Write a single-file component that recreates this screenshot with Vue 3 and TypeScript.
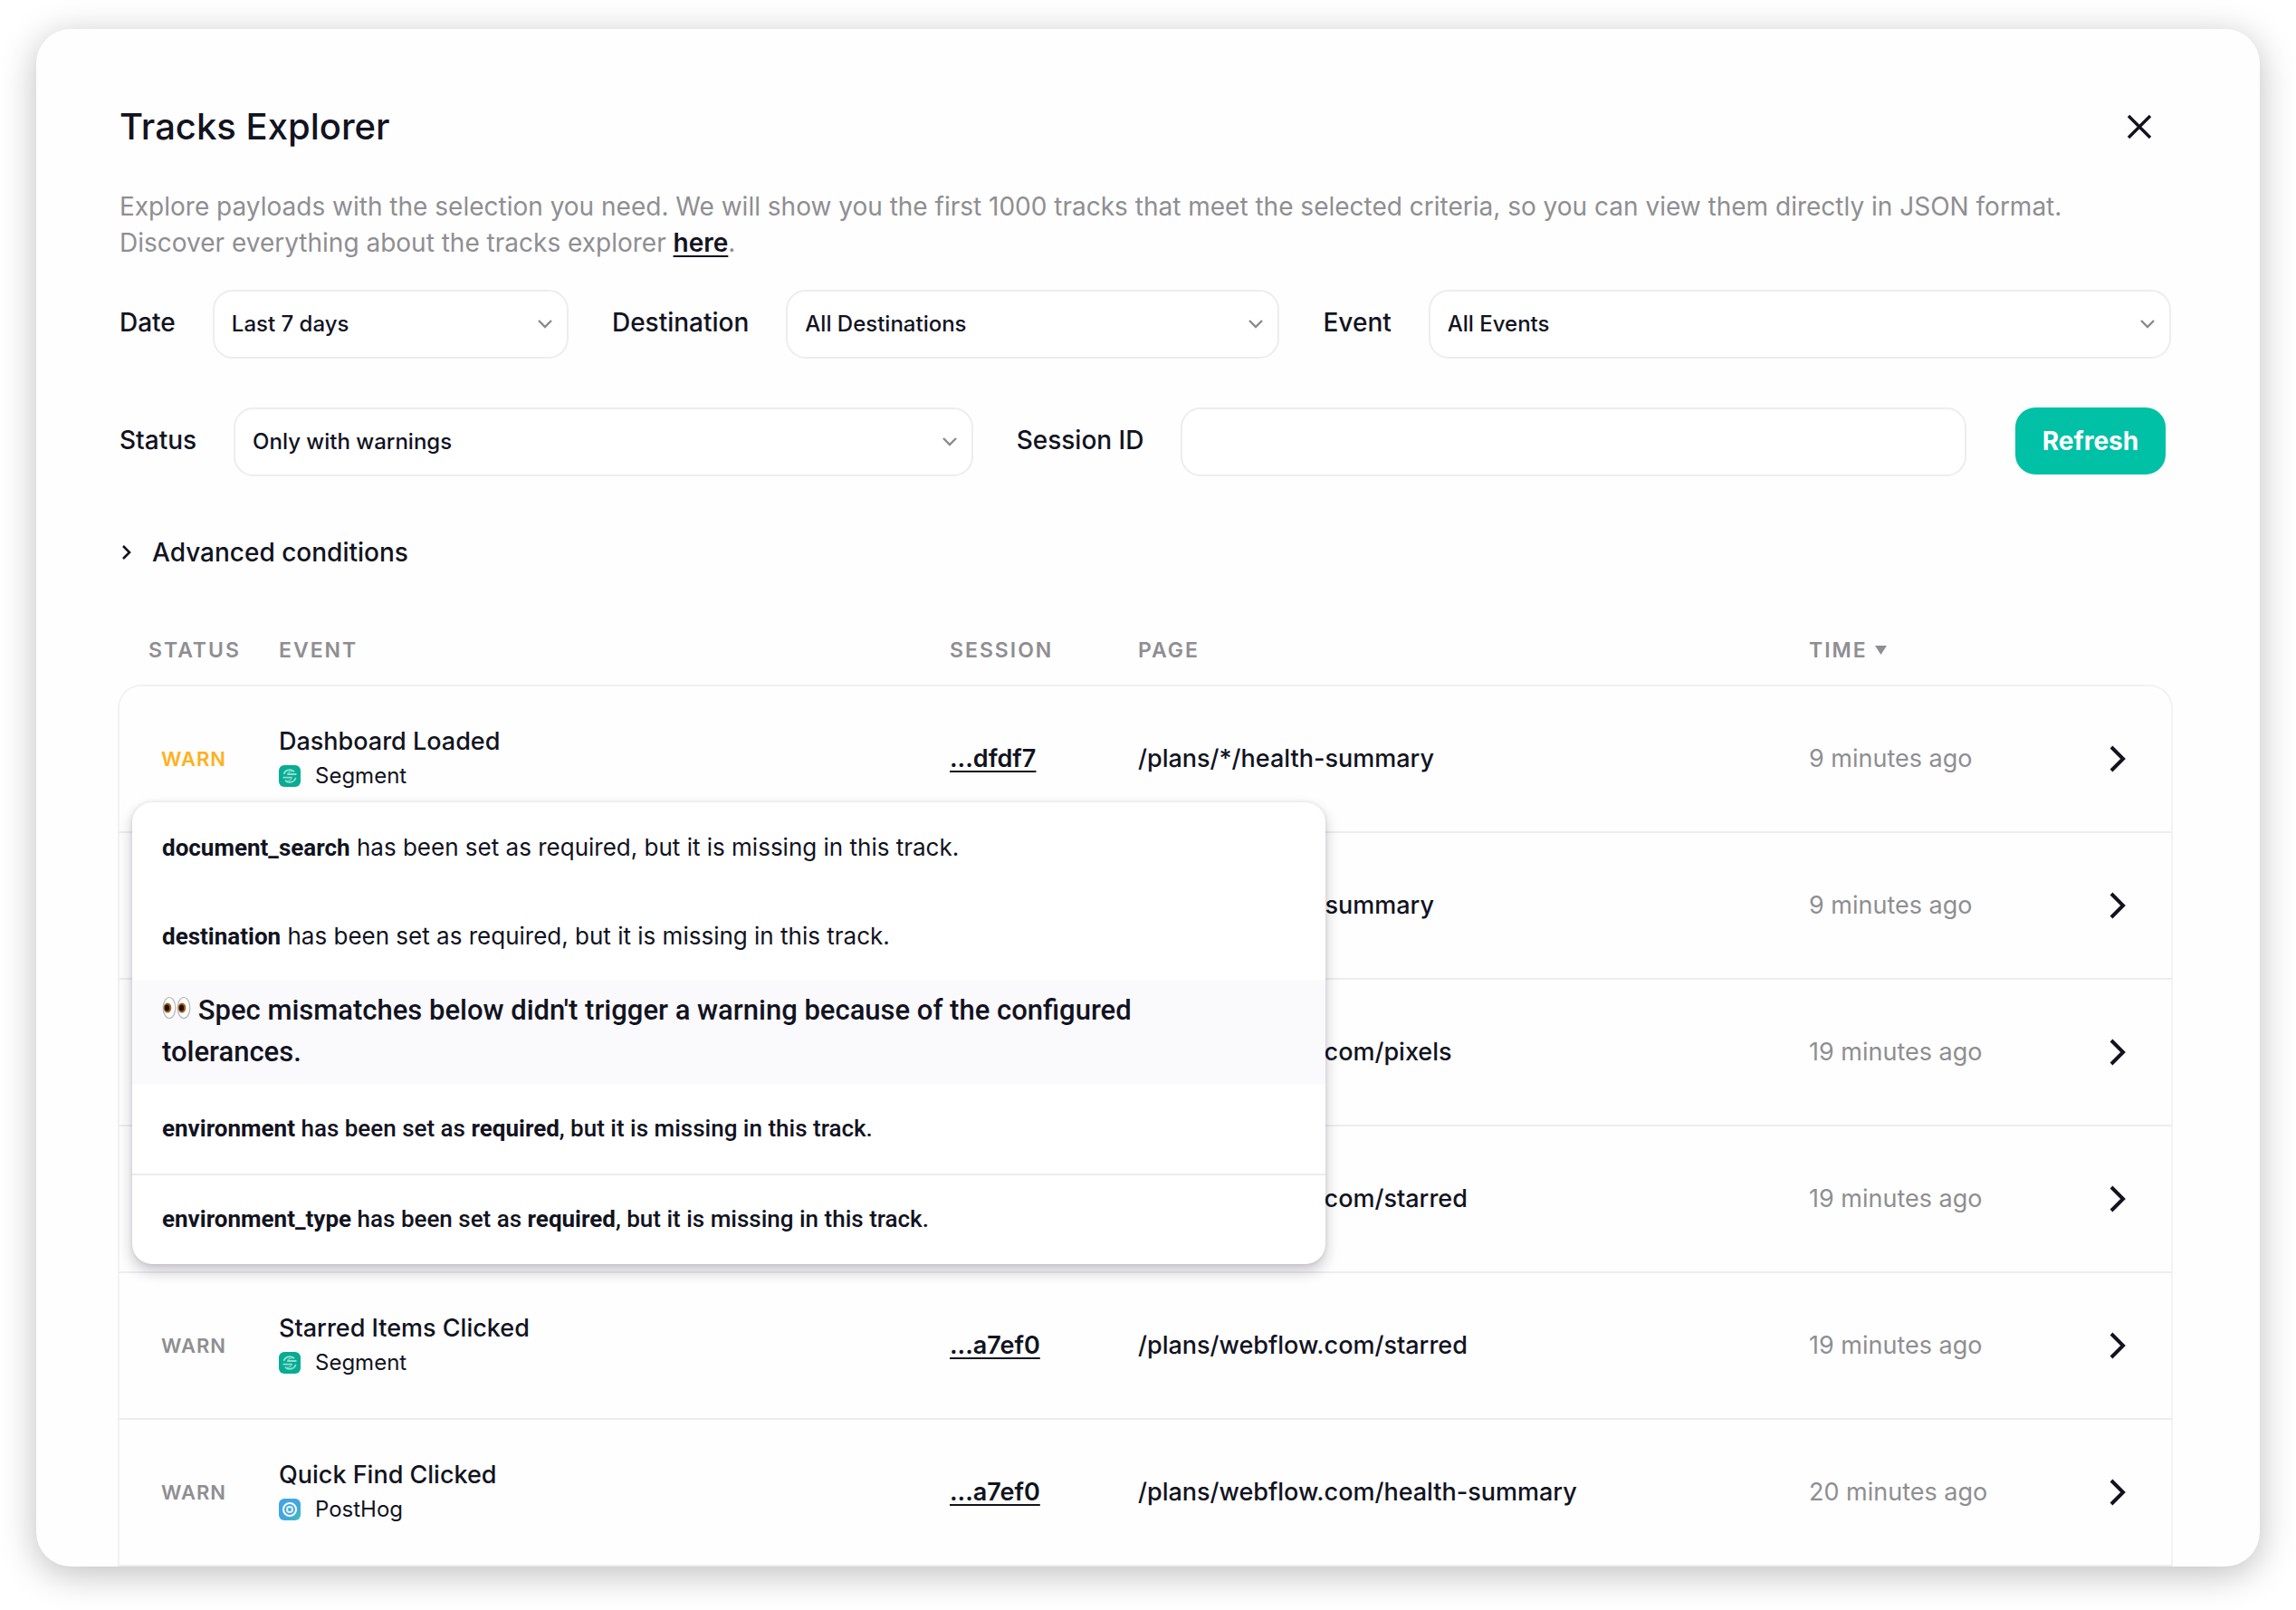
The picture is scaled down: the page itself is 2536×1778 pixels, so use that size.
<script setup lang="ts">
import { ref } from 'vue'

interface Track {
  id: number
  status?: string
  active?: boolean
  event?: string
  destination?: 'Segment' | 'PostHog'
  session?: string
  page: string
  time: string
}

const tracks: Track[] = [
  { id: 1, status: 'Warn', active: true, event: 'Dashboard Loaded', destination: 'Segment', session: '...dfdf7', page: '/plans/*/health-summary', time: '9 minutes ago' },
  { id: 2, page: '/plans/*/health-summary', time: '9 minutes ago' },
  { id: 3, page: '/plans/webflow.com/pixels', time: '19 minutes ago' },
  { id: 4, page: '/plans/webflow.com/starred', time: '19 minutes ago' },
  { id: 5, status: 'Warn', event: 'Starred Items Clicked', destination: 'Segment', session: '...a7ef0', page: '/plans/webflow.com/starred', time: '19 minutes ago' },
  { id: 6, status: 'Warn', event: 'Quick Find Clicked', destination: 'PostHog', session: '...a7ef0', page: '/plans/webflow.com/health-summary', time: '20 minutes ago' },
]

const date = ref('Last 7 days')
const destination = ref('All Destinations')
const eventName = ref('All Events')
const status = ref('Only with warnings')
const sessionId = ref('')
</script>

<template>
  <main class="card">
    <header class="head">
      <h1>Tracks Explorer</h1>
      <button class="close" type="button" aria-label="Close">
        <svg width="28" height="28" viewBox="0 0 28 28"><path d="M2 2 26 26M26 2 2 26" fill="none" stroke="currentColor" stroke-width="3.4" /></svg>
      </button>
    </header>
    <p class="intro">
      Explore payloads with the selection you need. We will show you the first 1000 tracks that meet the selected criteria, so you can view them directly in JSON format.<br>
      Discover everything about the tracks explorer <a href="#">here</a>.
    </p>

    <form class="filters" @submit.prevent>
      <div class="line">
        <label for="date">Date</label>
        <div class="field date">
          <select id="date" v-model="date"><option>Last 7 days</option></select>
          <svg class="caret" viewBox="0 0 18 12"><path d="M2 2 9 9 16 2" /></svg>
        </div>
        <label for="destination">Destination</label>
        <div class="field destination">
          <select id="destination" v-model="destination"><option>All Destinations</option></select>
          <svg class="caret" viewBox="0 0 18 12"><path d="M2 2 9 9 16 2" /></svg>
        </div>
        <label for="event">Event</label>
        <div class="field event">
          <select id="event" v-model="eventName"><option>All Events</option></select>
          <svg class="caret" viewBox="0 0 18 12"><path d="M2 2 9 9 16 2" /></svg>
        </div>
      </div>
      <div class="line second">
        <label for="status">Status</label>
        <div class="field status">
          <select id="status" v-model="status"><option>Only with warnings</option></select>
          <svg class="caret" viewBox="0 0 18 12"><path d="M2 2 9 9 16 2" /></svg>
        </div>
        <label for="session">Session ID</label>
        <div class="field session"><input id="session" v-model="sessionId" type="text"></div>
        <button class="refresh" type="submit">Refresh</button>
      </div>
    </form>

    <button class="advanced" type="button">
      <svg width="16" height="18" viewBox="0 0 16 18"><path d="M4 2 11 9 4 16" fill="none" stroke="currentColor" stroke-width="2.6" /></svg>
      Advanced conditions
    </button>

    <div class="results">
      <table>
        <colgroup><col class="c-status"><col><col class="c-session"><col><col class="c-time"><col class="c-open"></colgroup>
        <thead>
          <tr>
            <th class="h-status">Status</th>
            <th>Event</th>
            <th>Session</th>
            <th>Page</th>
            <th>Time <svg class="sort" width="13" height="10" viewBox="0 0 13 10"><path d="M0 0H13L6.500 10Z" fill="currentColor" /></svg></th>
            <th></th>
          </tr>
        </thead>
        <tbody>
          <tr v-for="t in tracks" :key="t.id">
            <td class="warn" :class="{ active: t.active }">{{ t.status }}</td>
            <td>
              <div v-if="t.event" class="name">{{ t.event }}</div>
              <div v-if="t.destination" class="dest">
                <svg v-if="t.destination === 'Segment'" width="24" height="24" viewBox="0 0 24 24">
                  <rect width="24" height="24" rx="6" fill="#09ab93" />
                  <g fill="none" stroke="#8fe0d2" stroke-width="1.8" stroke-linecap="round">
                    <path d="M16.500 6.800A7 7 0 0 0 5.600 9.300M7.500 17.300A7 7 0 0 0 18.500 14.500M10 10H18.800M5.200 13.600H14" />
                    <path d="M9.500 17.500A5 5 0 0 0 14 13.600M14.500 6.500A5 5 0 0 0 10 10" opacity=".6" />
                  </g>
                </svg>
                <svg v-else width="24" height="24" viewBox="0 0 24 24">
                  <defs><linearGradient id="ph" x1="0" y1="0" x2="1" y2="1"><stop offset=".6" stop-color="#42a7e0" /><stop offset="1" stop-color="#3fbfb4" /></linearGradient></defs>
                  <rect width="24" height="24" rx="6" fill="url(#ph)" />
                  <circle cx="12" cy="12" r="7" fill="none" stroke="#fff" stroke-width="2" />
                  <circle cx="12" cy="12" r="3" fill="none" stroke="#e4f4fc" stroke-width="2" />
                </svg>
                {{ t.destination }}
              </div>
            </td>
            <td><a v-if="t.session" href="#">{{ t.session }}</a></td>
            <td class="page">{{ t.page }}</td>
            <td class="time">{{ t.time }}</td>
            <td>
              <button class="open" type="button" aria-label="Open track">
                <svg width="20" height="30" viewBox="0 0 20 30"><path d="M3 2 16 15 3 28" fill="none" stroke="currentColor" stroke-width="4" /></svg>
              </button>
            </td>
          </tr>
        </tbody>
      </table>

      <div class="popup" role="tooltip">
        <p class="msg"><b>document_search</b> has been set as required, but it is missing in this track.</p>
        <p class="msg"><b>destination</b> has been set as required, but it is missing in this track.</p>
        <p class="note">
          <svg class="eyes" width="32" height="26" viewBox="0 0 32 26" aria-label="eyes">
            <g fill="#fff" stroke="#b9b6b8" stroke-width="1.2"><ellipse cx="8" cy="13" rx="6.800" ry="11.500" /><ellipse cx="24" cy="13" rx="6.800" ry="11.500" /></g>
            <ellipse cx="6" cy="13" rx="4.300" ry="5.500" fill="#a0611c" /><ellipse cx="22" cy="13" rx="4.300" ry="5.500" fill="#a0611c" />
            <ellipse cx="5.500" cy="13" rx="2.600" ry="3.500" fill="#1d1209" /><ellipse cx="21.500" cy="13" rx="2.600" ry="3.500" fill="#1d1209" />
          </svg>
          Spec mismatches below didn't trigger a warning because of the configured tolerances.
        </p>
        <p class="msg tolerated"><b>environment</b> has been set as <b>required</b>, but it is missing in this track.</p>
        <p class="msg tolerated"><b>environment_type</b> has been set as <b>required</b>, but it is missing in this track.</p>
      </div>
    </div>
  </main>
</template>

<style>
body {
  margin: 0;
  background: #fff;
}
</style>

<style scoped>
* {
  box-sizing: border-box;
}
.card {
  margin: 32px 40px 48px;
  padding: 80px 96px 0 90px;
  overflow: hidden;
  border-radius: 38px;
  background: #fefefe;
  box-shadow: 0 8px 40px rgba(0, 0, 0, 0.26);
  color: #12131f;
  font: 400 28px/40px Inter, "Liberation Sans", sans-serif;
}
.head,
.intro,
.filters,
.advanced {
  margin-right: 2px;
  margin-left: 2px;
}
.head {
  display: flex;
  align-items: center;
  justify-content: space-between;
}
h1 {
  margin: 0;
  font-size: 40px;
  font-weight: 500;
  line-height: 56px;
}
button {
  padding: 0;
  border: 0;
  background: none;
  color: inherit;
  font: inherit;
}
.close {
  display: flex;
  margin-right: 21px;
}
.intro {
  margin-top: 40px;
  margin-bottom: 32px;
  color: #8f8e92;
}
a {
  color: #12131f;
  font-weight: 600;
  text-decoration: underline;
  text-decoration-thickness: 2px;
  text-underline-offset: 4px;
}
.line {
  display: flex;
  align-items: flex-start;
}
.second {
  margin-top: 54px;
}
label {
  margin-right: 41px;
  padding-top: 16px;
  font-weight: 500;
}
.field {
  position: relative;
  flex: 1 1 0;
  min-width: 0;
  margin-right: 48px;
}
.date { flex-grow: 393; }
.destination { flex-grow: 545; }
.event { flex-grow: 820; margin-right: 0; }
.status { flex-grow: 816; }
.session { flex-grow: 867; margin-right: 54px; }
select,
input {
  display: block;
  width: 100%;
  height: 76px;
  padding: 0 19px;
  border: 2px solid #eeecef;
  border-radius: 22px;
  background: #fff;
  color: inherit;
  font: 500 24px/32px Inter, "Liberation Sans", sans-serif;
  appearance: none;
}
.caret {
  position: absolute;
  top: 32px;
  right: 17px;
  width: 18px;
  height: 12px;
  fill: none;
  stroke: #8b8a8e;
  stroke-width: 2.4;
  pointer-events: none;
}
.refresh {
  width: 166px;
  height: 74px;
  margin-right: 6px;
  border-radius: 22px;
  background: #00c0a5;
  color: #fff;
  font-weight: 700;
}
.advanced {
  display: flex;
  align-items: center;
  gap: 20px;
  margin-top: 64px;
  font-weight: 500;
}
.results {
  position: relative;
  margin-top: 60px;
}
table {
  width: 100%;
  table-layout: fixed;
  border-spacing: 0;
  font-size: 27px;
}
.c-status { width: 178px; }
.c-session { width: 208px; }
.c-time { width: 300px; }
.c-open { width: 102px; }
th {
  height: 66px;
  padding: 0 0 10px;
  color: #8f8e92;
  font-size: 23px;
  font-weight: 600;
  letter-spacing: 2px;
  text-align: left;
  text-transform: uppercase;
}
.h-status {
  padding-left: 34px;
}
.sort {
  vertical-align: 3px;
}
td {
  height: 162px;
  padding: 0;
  border-bottom: 2px solid #eeecef;
}
tbody tr:first-child td {
  height: 164px;
  border-top: 2px solid #f3f1f4;
}
td:first-child { border-left: 2px solid #f3f1f4; }
td:last-child { border-right: 2px solid #f3f1f4; }
tbody tr:first-child td:first-child { border-top-left-radius: 26px; }
tbody tr:first-child td:last-child { border-top-right-radius: 26px; }
.warn {
  padding-left: 46px;
  color: #8f8e92;
  font-size: 22px;
  font-weight: 600;
  letter-spacing: 1px;
  text-transform: uppercase;
}
.warn.active {
  color: #ffb020;
}
.name {
  font-weight: 500;
}
.dest {
  display: flex;
  align-items: center;
  gap: 16px;
  padding-bottom: 2px;
  font-size: 24px;
  line-height: 36px;
}
.page {
  font-weight: 500;
}
.time {
  color: #8f8e92;
}
.open {
  display: flex;
  margin-left: 31px;
}
.popup {
  position: absolute;
  top: 196px;
  left: 16px;
  width: 1318px;
  overflow: hidden;
  border-radius: 22px;
  background: #fff;
  box-shadow: 0 8px 16px rgba(30, 20, 40, 0.24), 0 0 4px rgba(30, 20, 40, 0.12);
  font-size: 26px;
}
.msg {
  margin: 0;
  padding: 30px 33px 28px;
}
.msg b {
  font-family: Roboto, sans-serif;
}
.tolerated {
  padding: 28px 33px 30px;
  font-family: Roboto, sans-serif;
  font-weight: 500;
}
.tolerated + .tolerated {
  border-top: 2px solid #ecebee;
}
.note {
  margin: 0;
  padding: 11px 200px 13px 33px;
  background: #faf9fc;
  font: 500 31px/46px Roboto, sans-serif;
}
</style>
